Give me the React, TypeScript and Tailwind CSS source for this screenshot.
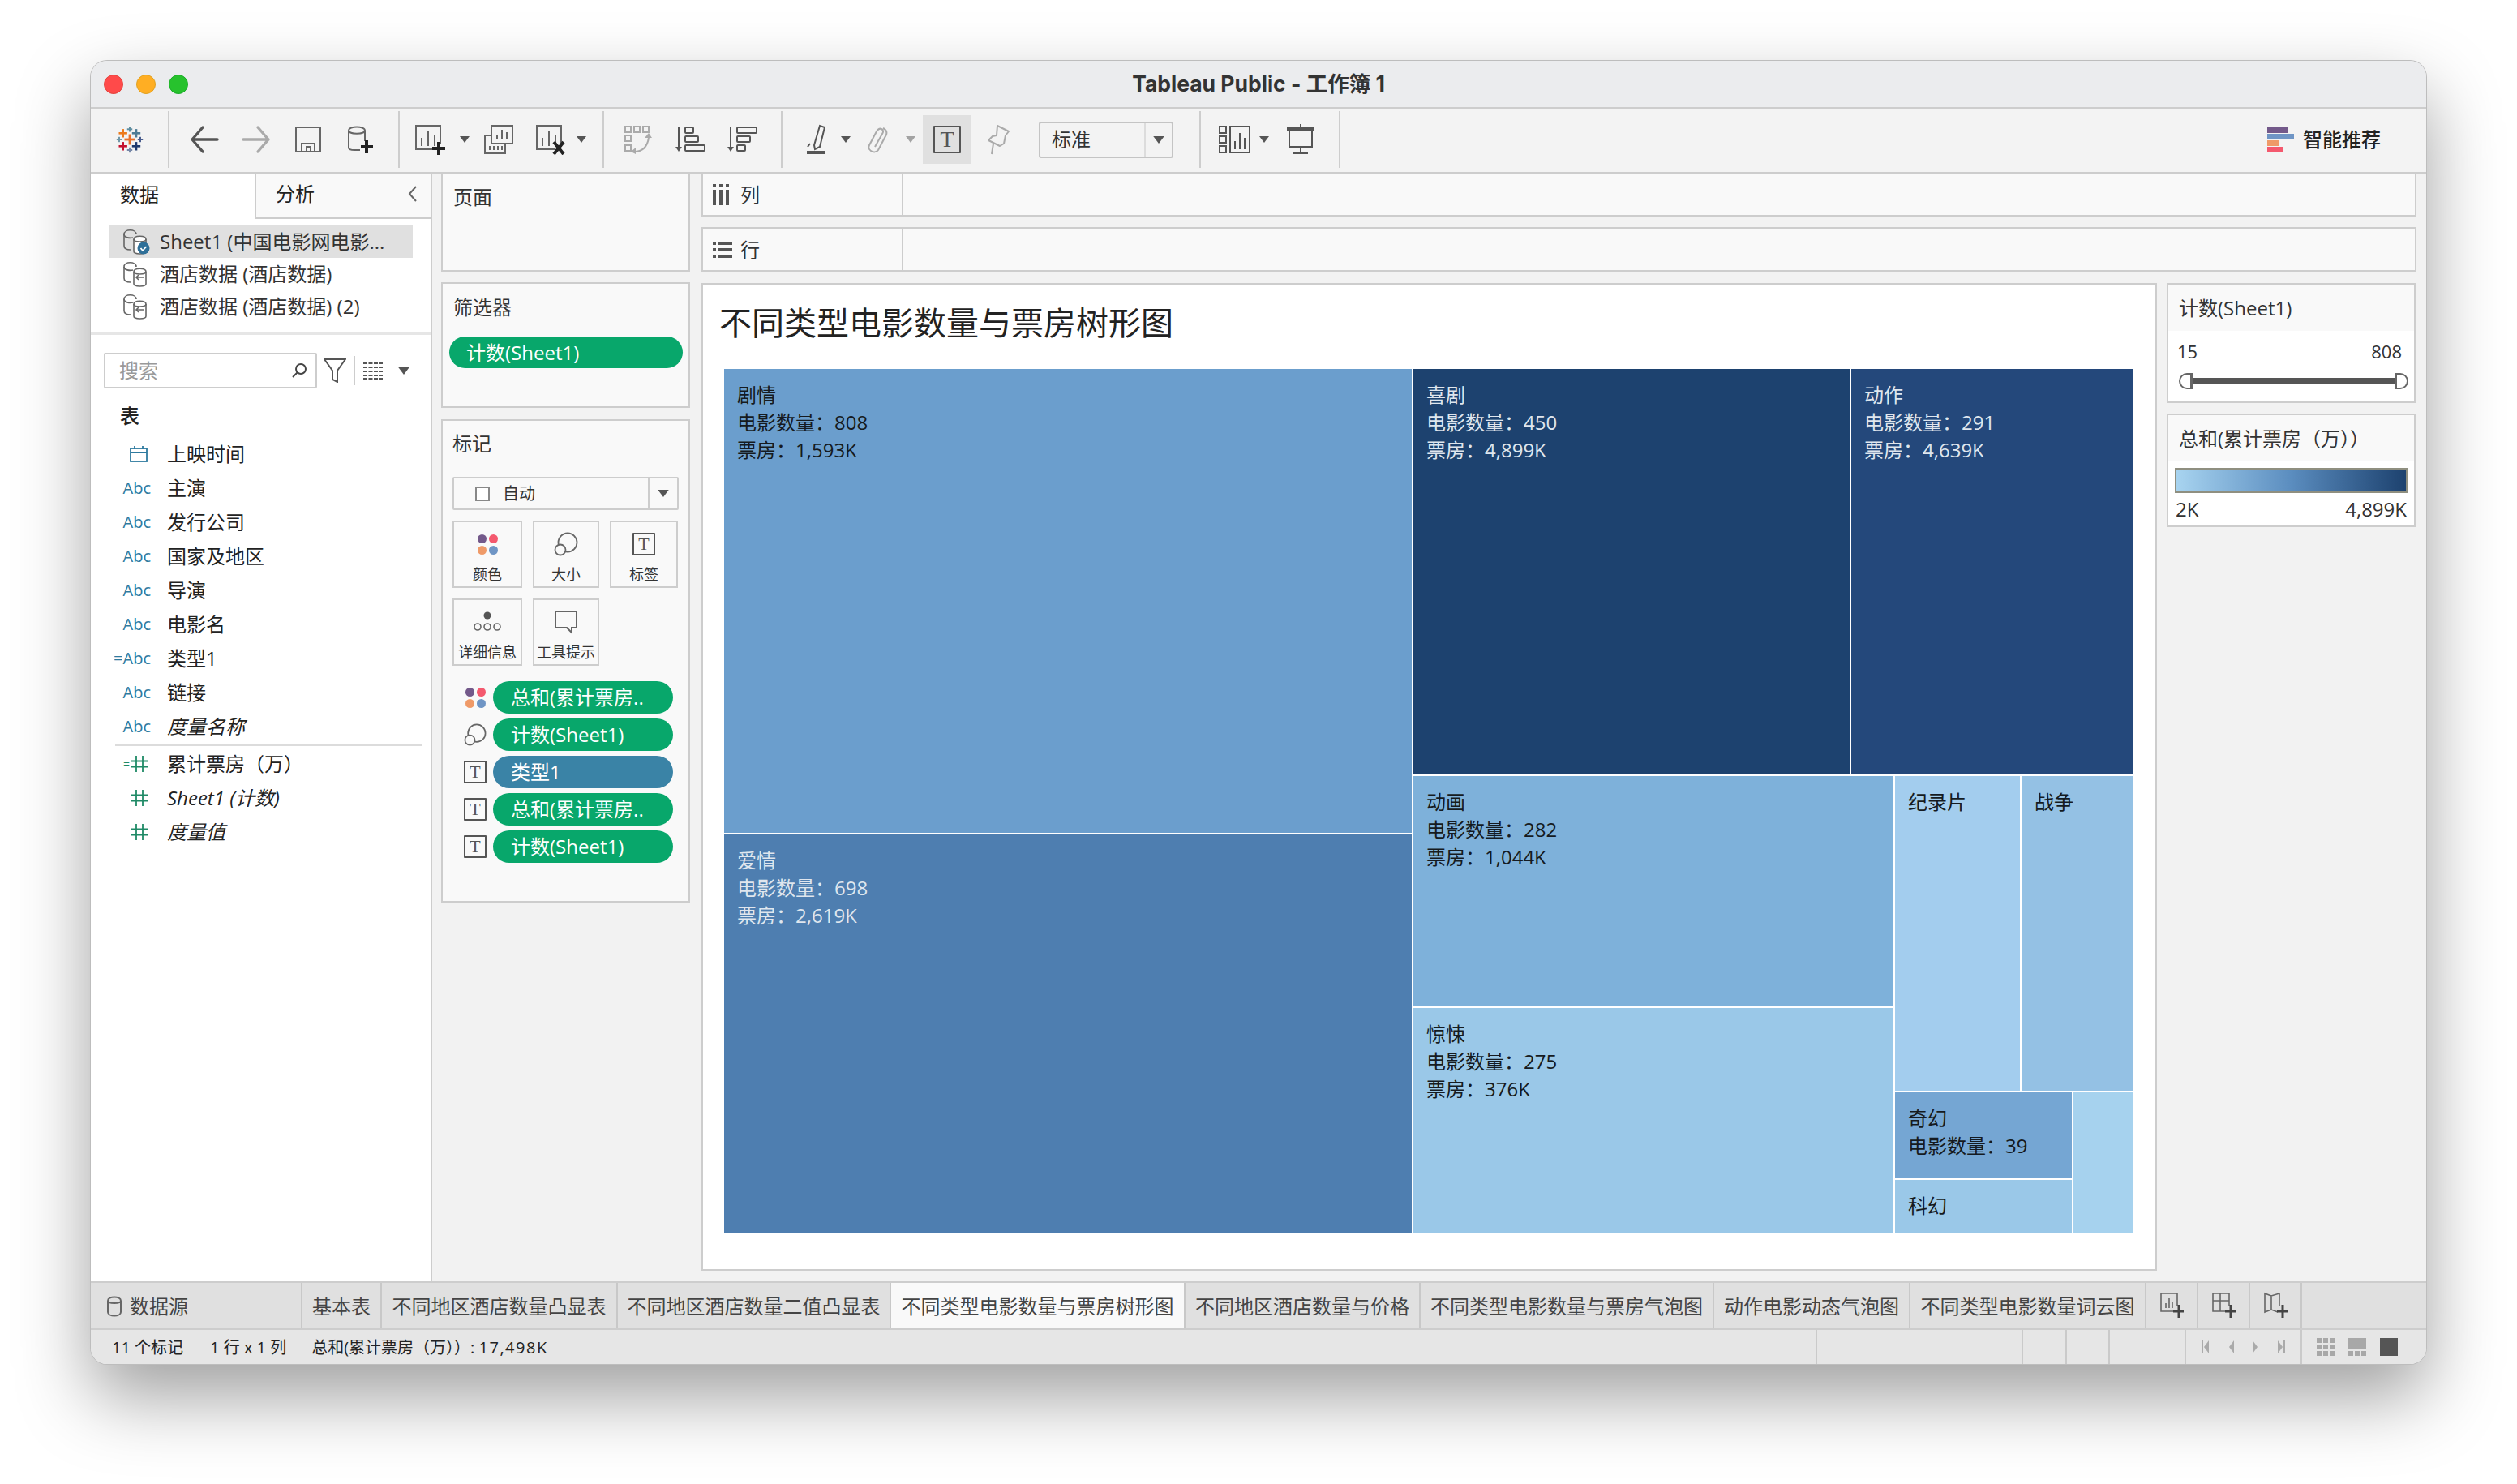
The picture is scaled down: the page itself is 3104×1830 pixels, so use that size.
const cardBorder = "border-[#cdcdcd]";

function Cross({ x, y, s, t, c }: { x: number; y: number; s: number; t: number; c: string }) {
  return (
    <g fill={c}>
      <rect x={x - s} y={y - t / 2} width={s * 2} height={t} />
      <rect x={x - t / 2} y={y - s} width={t} height={s * 2} />
    </g>
  );
}

function TableauLogo() {
  return (
    <svg width="36" height="36" viewBox="0 0 36 36">
      <Cross x={18} y={18} s={6.5} t={2.8} c="#e8702a" />
      <Cross x={9.7} y={10.3} s={5.2} t={2.6} c="#ec7a1c" />
      <Cross x={26} y={10.3} s={5.2} t={2.6} c="#4e7c96" />
      <Cross x={9.7} y={26.3} s={5.2} t={2.6} c="#c4102e" />
      <Cross x={26} y={26.3} s={5.2} t={2.6} c="#1f3a6e" />
      <Cross x={18} y={5.3} s={3.2} t={2} c="#5f8ea0" />
      <Cross x={5} y={18} s={3.2} t={2} c="#7198a8" />
      <Cross x={31} y={18} s={3.2} t={2} c="#4a5d8e" />
      <Cross x={18} y={31} s={3.2} t={2} c="#7788a8" />
    </svg>
  );
}

function Arrow({ back, color }: { back?: boolean; color: string }) {
  return (
    <svg width="36" height="36" viewBox="0 0 36 36" fill="none" stroke={color} strokeWidth="3.4" strokeLinecap="round" strokeLinejoin="round">
      {back ? <path d="M34 18H3M16 3L3 18l13 15" /> : <path d="M2 18h31M20 3l13 15-13 15" />}
    </svg>
  );
}

function SaveIcon() {
  return (
    <svg width="34" height="34" viewBox="0 0 34 34" fill="none" stroke="#666" strokeWidth="2">
      <rect x="2" y="2" width="30" height="30" />
      <path d="M9 32V22h16v10M15 32v-6h5v6" />
    </svg>
  );
}

function AddDb() {
  return (
    <svg width="34" height="36" viewBox="0 0 34 36" fill="none">
      <path d="M3 7c0-6 20-6 20 0v13M3 7v21c0 2 3 3 7 3h7M3 7c0 5 20 5 20 0" stroke="#666" strokeWidth="2" />
      <path d="M25 19v16M18 27h15" stroke="#222" strokeWidth="4" />
    </svg>
  );
}

function SheetIcon({ mark }: { mark: "plus" | "x" }) {
  return (
    <svg width="40" height="38" viewBox="0 0 40 38" fill="none">
      <path d="M25 31H3V2h30v22" stroke="#666" strokeWidth="2" />
      <path d="M10 27V17M18 27V8M26 27V14" stroke="#666" strokeWidth="2" />
      {mark === "plus" ? (
        <path d="M31 22v16M23 30h16" stroke="#222" strokeWidth="4" />
      ) : (
        <path d="M24 22l12 15M36 22L24 37" stroke="#222" strokeWidth="4" />
      )}
    </svg>
  );
}

function DupIcon() {
  return (
    <svg width="38" height="38" viewBox="0 0 38 38" fill="none" stroke="#666" strokeWidth="2">
      <rect x="10" y="2" width="26" height="22" fill="#f3f3f3" />
      <path d="M17 19v-6M23 19V7M29 19v-9" />
      <path d="M10 14H2v22h25V24" />
      <path d="M8 32v-5M13 32v-5M18 32v-5M23 32v-5" />
    </svg>
  );
}

function SwapIcon() {
  return (
    <svg width="36" height="36" viewBox="0 0 36 36" fill="none" stroke="#aaa" strokeWidth="2">
      <rect x="2" y="2" width="7" height="7" />
      <rect x="13" y="2" width="7" height="7" />
      <rect x="24" y="2" width="7" height="7" />
      <rect x="2" y="13" width="7" height="7" />
      <rect x="2" y="25" width="7" height="7" />
      <path d="M13 33c9 0 16-5 18-17" />
      <path d="M26 16l5-6 4 6z" fill="#aaa" stroke="none" />
      <path d="M15 28l-6 5 6 3z" fill="#aaa" stroke="none" />
    </svg>
  );
}

function SortIcon({ desc }: { desc?: boolean }) {
  const widths = desc ? [24, 16, 10] : [10, 16, 24];
  return (
    <svg width="38" height="34" viewBox="0 0 38 34" fill="none" stroke="#555" strokeWidth="2">
      <path d="M4 1v27" />
      <path d="M0 26h8l-4 6z" fill="#555" stroke="none" />
      {widths.map((w, i) => (
        <rect key={i} x="12" y={2 + i * 11} width={w} height="7" rx="1" />
      ))}
    </svg>
  );
}

function PenIcon() {
  return (
    <svg width="26" height="38" viewBox="0 0 26 38" fill="none" stroke="#555" strokeWidth="2">
      <path d="M10 26L17 2l6 2-6 24-6 3z" />
      <path d="M2 28l3-4" />
      <rect x="1" y="33" width="22" height="4" fill="#555" stroke="none" />
    </svg>
  );
}

function ClipIcon() {
  return (
    <svg width="28" height="34" viewBox="0 0 28 34" fill="none" stroke="#aaa" strokeWidth="2">
      <path d="M20 3c4 2 5 5 4 8L14 30c-2 3-6 3-9 1s-3-5-2-7L12 7c2-3 4-4 6-3s3 3 1 6l-9 16" />
    </svg>
  );
}

function PinIcon() {
  return (
    <svg width="30" height="38" viewBox="0 0 30 38" fill="none" stroke="#aaa" strokeWidth="2" strokeLinejoin="round">
      <path d="M14 2l14 7-4 5-2 10-5 3-14-7 5-5 5-1z" />
      <path d="M9 24L7 37" />
    </svg>
  );
}

function ChartPick() {
  return (
    <svg width="40" height="36" viewBox="0 0 40 36" fill="none" stroke="#555" strokeWidth="2">
      <rect x="1" y="2" width="8" height="8" />
      <rect x="1" y="14" width="8" height="8" />
      <rect x="1" y="26" width="8" height="8" />
      <rect x="14" y="2" width="24" height="32" />
      <path d="M20 30V20M26 30V10M32 30V16" />
    </svg>
  );
}

function PresentIcon() {
  return (
    <svg width="36" height="38" viewBox="0 0 36 38" fill="none" stroke="#555" strokeWidth="2">
      <rect x="1" y="4" width="34" height="5" fill="#555" stroke="none" />
      <path d="M4 8v20h28V8M18 0v6M18 28v8M9 36h18" />
    </svg>
  );
}

function Caret({ size = "s" }: { size?: "s" | "m" }) {
  return (
    <svg width={size === "s" ? 12 : 14} height={size === "s" ? 8 : 9} viewBox="0 0 12 8" fill="#555">
      <path d="M0 0h12L6 8z" />
    </svg>
  );
}

function SmartIcon() {
  return (
    <div className="flex w-[33px] flex-col gap-[1px]">
      <div className="h-[7px] w-[25px] bg-[#73598a]" />
      <div className="h-[7px] w-[33px] bg-[#6f95c5]" />
      <div className="h-[7px] w-[14px] bg-[#ef9a68]" />
      <div className="h-[7px] w-[19px] bg-[#f4596e]" />
    </div>
  );
}

function ToolSep({ className }: { className?: string }) {
  return <div className={`h-[70px] w-[2px] shrink-0 bg-[#cdcdcd] ${className ?? ""}`} />;
}

function Slot({ className, children }: { className: string; children?: React.ReactNode }) {
  return <div className={`flex shrink-0 items-center justify-center ${className}`}>{children}</div>;
}

function Toolbar() {
  return (
    <div className="flex h-[78px] items-center bg-[#f3f3f3] pb-[2px]">
      <Slot className="w-[95px]"><TableauLogo /></Slot>
      <ToolSep />
      <Slot className="ml-[11px] w-[64px]"><Arrow back color="#555" /></Slot>
      <Slot className="w-[64px]"><Arrow color="#aaa" /></Slot>
      <Slot className="w-[64px]"><SaveIcon /></Slot>
      <Slot className="w-[64px]"><AddDb /></Slot>
      <ToolSep className="ml-[15px]" />
      <Slot className="w-[74px]"><SheetIcon mark="plus" /></Slot>
      <Slot className="w-[12px]"><Caret /></Slot>
      <Slot className="w-[72px]"><DupIcon /></Slot>
      <Slot className="w-[56px]"><SheetIcon mark="x" /></Slot>
      <Slot className="ml-[4px] w-[12px]"><Caret /></Slot>
      <ToolSep className="ml-[20px]" />
      <Slot className="w-[84px]"><SwapIcon /></Slot>
      <Slot className="w-[46px]"><SortIcon /></Slot>
      <Slot className="w-[82px]"><SortIcon desc /></Slot>
      <ToolSep className="ml-[6px]" />
      <Slot className="ml-[12px] w-[60px]"><PenIcon /></Slot>
      <Slot className="w-[12px]"><Caret /></Slot>
      <Slot className="w-[68px]"><ClipIcon /></Slot>
      <Slot className="w-[12px] opacity-50"><Caret /></Slot>
      <Slot className="ml-[9px] h-[60px] w-[60px] bg-[#e0e0e0]"><TBox big /></Slot>
      <Slot className="w-[66px]"><PinIcon /></Slot>
      <div className="ml-[17px] flex h-[45px] w-[166px] items-center rounded-[3px] border-2 border-[#c4c4c4] text-[24px] text-[#333]">
        <span className="w-[128px] pl-[14px]">标准</span>
        <div className="flex h-full flex-1 items-center justify-center border-l-2 border-[#dcdcdc]"><Caret size="m" /></div>
      </div>
      <ToolSep className="ml-[32px]" />
      <Slot className="ml-[12px] w-[60px]"><ChartPick /></Slot>
      <Slot className="w-[12px]"><Caret /></Slot>
      <Slot className="w-[78px]"><PresentIcon /></Slot>
      <ToolSep className="ml-[8px]" />
      <div className="ml-auto flex items-center gap-[11px] pr-[56px]">
        <SmartIcon />
        <span className="text-[24px] font-medium leading-none text-[#222]">智能推荐</span>
      </div>
    </div>
  );
}

function TBox({ big }: { big?: boolean }) {
  return (
    <div
      className={`flex items-center justify-center rounded-[1px] border-2 border-[#555] font-['Liberation_Serif',serif] leading-none text-[#555] ${
        big ? "h-[34px] w-[34px] border-[#333] text-[28px] text-[#333]" : "h-[28px] w-[28px] text-[22px]"
      }`}
    >
      T
    </div>
  );
}

function DbIcon({ active }: { active?: boolean }) {
  return (
    <svg width="34" height="32" viewBox="0 0 34 32" fill="none" stroke="#666" strokeWidth="1.6">
      <path d="M2 7c0-7 15-7 15 0M2 7v14c0 3 3 5 8 5" />
      <path d="M2 7c0 4 7 5 11 4" />
      <path d="M14 13c0-5 15-5 15 0v15c0 4-15 4-15 0z" fill="#fff" />
      <path d="M14 13c0 4 15 4 15 0" />
      {active ? (
        <g>
          <circle cx="26" cy="24" r="7.5" fill="#2e6f98" stroke="none" />
          <path d="M22.5 24l2.5 3 4.5-5" stroke="#fff" strokeWidth="1.8" />
        </g>
      ) : (
        <path d="M17 20h9M20 17l-3 3 3 3" />
      )}
    </svg>
  );
}

function Calendar() {
  return (
    <svg width="22" height="22" viewBox="0 0 22 22" fill="none" stroke="#2e7a9f" strokeWidth="1.8">
      <rect x="1" y="4" width="20" height="16" />
      <path d="M1 9h20M6 1v4M16 1v4" />
    </svg>
  );
}

function Hash({ eq }: { eq?: boolean }) {
  return (
    <span className="flex items-center gap-[2px]">
      {eq && <span className="text-[14px] leading-none text-[#1f8a66]">=</span>}
      <svg width="20" height="22" viewBox="0 0 20 22" fill="none" stroke="#1f8a66" strokeWidth="1.8">
        <path d="M6 1v20M14 1v20M0 7.5h20M0 14.5h20" />
      </svg>
    </span>
  );
}

function Abc({ eq }: { eq?: boolean }) {
  return (
    <span className="text-[20px] leading-none text-[#2e7a9f]">{eq ? "=Abc" : "Abc"}</span>
  );
}

const dims = [
  { name: "主演" },
  { name: "发行公司" },
  { name: "国家及地区" },
  { name: "导演" },
  { name: "电影名" },
  { name: "类型1", eq: true },
  { name: "链接" },
  { name: "度量名称", it: true },
];

const measures = [
  { name: "累计票房（万）", eq: true },
  { name: "Sheet1 (计数)", it: true },
  { name: "度量值", it: true },
];

function FieldRow({ icon, name, italic, hash }: { icon: React.ReactNode; name: string; italic?: boolean; hash?: boolean }) {
  return (
    <div className="flex h-[42px] items-center text-[24px] text-[#222]">
      <div className={`flex w-[75px] shrink-0 justify-end ${hash ? "pr-[5px]" : "pr-[1px]"}`}>{icon}</div>
      <span className={`ml-[19px] ${italic ? "italic" : ""}`}>{name}</span>
    </div>
  );
}

function LeftPanel() {
  return (
    <div className="flex w-[421px] shrink-0 flex-col border-r-2 border-[#cdcdcd] bg-white">
      <div className="flex h-[56px] text-[24px] text-[#222]">
        <div className="flex w-[202px] items-center pb-[4px] pl-[36px]">数据</div>
        <div className="flex flex-1 items-center justify-between border-b-2 border-l-2 border-[#cdcdcd] bg-[#f9f9f9] pb-[4px] pl-[24px] pr-[16px]">
          <span>分析</span>
          <svg width="12" height="20" viewBox="0 0 12 20" fill="none" stroke="#666" strokeWidth="2">
            <path d="M10 1L2 10l8 9" />
          </svg>
        </div>
      </div>
      <div className="mt-[8px] flex flex-col text-[24px] text-[#333]">
        <div className="mx-[22px] flex h-[40px] items-center gap-[12px] bg-[#e0e0e0] pl-[17px]">
          <DbIcon active />
          <span className="whitespace-nowrap">Sheet1 (中国电影网电影...</span>
        </div>
        <div className="mx-[22px] flex h-[40px] items-center gap-[12px] pl-[17px]">
          <DbIcon />
          <span className="whitespace-nowrap">酒店数据 (酒店数据)</span>
        </div>
        <div className="mx-[22px] flex h-[40px] items-center gap-[12px] pl-[17px]">
          <DbIcon />
          <span className="whitespace-nowrap">酒店数据 (酒店数据) (2)</span>
        </div>
      </div>
      <div className="mt-[12px] h-[3px] bg-[#e6e6e6]" />
      <div className="mt-[22px] flex items-center pl-[16px]">
        <div className="flex h-[44px] w-[263px] items-center justify-between rounded-[2px] border-2 border-[#cdcdcd] pl-[17px] pr-[10px] text-[24px] text-[#999]">
          <span>搜索</span>
          <svg width="20" height="20" viewBox="0 0 20 20" fill="none" stroke="#444" strokeWidth="2">
            <circle cx="12" cy="8" r="6" />
            <path d="M7.5 12.5L2 18" />
          </svg>
        </div>
        <svg className="ml-[8px]" width="28" height="30" viewBox="0 0 28 30" fill="none" stroke="#555" strokeWidth="2">
          <path d="M1 1h26L17 15v14l-6-3V15z" />
        </svg>
        <div className="ml-[9px] h-[36px] w-[2px] bg-[#cdcdcd]" />
        <svg className="ml-[10px]" width="24" height="22" viewBox="0 0 24 22" fill="none" stroke="#555" strokeWidth="2" strokeDasharray="5 1.5">
          <path d="M0 2h24M0 7h24M0 12h24M0 17h24M0 21h24" />
        </svg>
        <div className="ml-[19px]"><Caret size="m" /></div>
      </div>
      <div className="mt-[17px] flex h-[34px] items-center pl-[36px] text-[24px] font-medium text-[#222]">表</div>
      <div className="mt-[9px]">
        <FieldRow icon={<Calendar />} name="上映时间" hash />
        {dims.map((d) => (
          <FieldRow key={d.name} icon={<Abc eq={d.eq} />} name={d.name} italic={d.it} />
        ))}
      </div>
      <div className="ml-[30px] mt-[1px] h-[2px] w-[378px] bg-[#dcdcdc]" />
      <div className="mt-[1px]">
        {measures.map((m) => (
          <FieldRow key={m.name} icon={<Hash eq={m.eq} />} name={m.name} italic={m.it} hash />
        ))}
      </div>
    </div>
  );
}

function Dots() {
  return (
    <div className="grid grid-cols-2 gap-[3px]">
      <div className="h-[11px] w-[11px] rounded-full bg-[#73598a]" />
      <div className="h-[11px] w-[11px] rounded-full bg-[#f4596e]" />
      <div className="h-[11px] w-[11px] rounded-full bg-[#ef9a68]" />
      <div className="h-[11px] w-[11px] rounded-full bg-[#6f95c5]" />
    </div>
  );
}

function SizeIcon() {
  return (
    <svg width="30" height="30" viewBox="0 0 30 30" fill="none" stroke="#666" strokeWidth="1.8">
      <circle cx="17" cy="13" r="11.5" />
      <circle cx="8" cy="22" r="6.5" fill="#f9f9f9" />
    </svg>
  );
}

function DetailIcon() {
  return (
    <svg width="34" height="26" viewBox="0 0 34 26" fill="none" stroke="#666" strokeWidth="1.6">
      <circle cx="17" cy="5" r="4.5" fill="#555" stroke="none" />
      <circle cx="5" cy="19" r="4" />
      <circle cx="17" cy="19" r="4" />
      <circle cx="29" cy="19" r="4" />
    </svg>
  );
}

function TipIcon() {
  return (
    <svg width="30" height="30" viewBox="0 0 30 30" fill="none" stroke="#666" strokeWidth="2">
      <path d="M2 2h26v20h-6v6l-6-6H2z" />
    </svg>
  );
}

function MarkBtn({ icon, label }: { icon: React.ReactNode; label: string }) {
  return (
    <div className="flex h-[83px] flex-col items-center border-2 border-[#cdcdcd]">
      <div className="flex h-[52px] items-center justify-center pt-[2px]">{icon}</div>
      <span className="whitespace-nowrap text-[18px] leading-[24px] text-[#333]">{label}</span>
    </div>
  );
}

function Pill({ text, blue }: { text: string; blue?: boolean }) {
  return (
    <div className={`flex h-[40px] w-[222px] items-center rounded-full pl-[22px] text-[24px] text-white ${blue ? "bg-[#3a83a6]" : "bg-[#08a76b]"}`}>
      <span className="whitespace-nowrap">{text}</span>
    </div>
  );
}

function MarkRow({ icon, text, blue }: { icon: React.ReactNode; text: string; blue?: boolean }) {
  return (
    <div className="ml-[14px] flex items-center gap-[8px]">
      <div className="flex w-[28px] items-center justify-center">{icon}</div>
      <Pill text={text} blue={blue} />
    </div>
  );
}

function MiddleCol() {
  return (
    <div className="ml-[11px] flex w-[307px] shrink-0 flex-col text-[24px] leading-[30px] text-[#333]">
      <div className={`h-[121px] border-x-2 border-b-2 ${cardBorder} bg-[#f9f9f9] pl-[13px] pt-[14px]`}>页面</div>
      <div className={`mt-[13px] h-[155px] border-2 ${cardBorder} bg-[#f9f9f9] pt-[14px]`}>
        <div className="pl-[13px]">筛选器</div>
        <div className="ml-[8px] mt-[21px] flex h-[39px] w-[288px] items-center rounded-full bg-[#08a76b] pl-[21px] text-white">计数(Sheet1)</div>
      </div>
      <div className={`mt-[14px] h-[596px] border-2 ${cardBorder} bg-[#f9f9f9] pl-[12px] pt-[13px]`}>
        <div>标记</div>
        <div className="mt-[26px] flex h-[41px] w-[279px] items-center rounded-[2px] border-2 border-[#cdcdcd] text-[20px]">
          <div className="ml-[26px] h-[18px] w-[18px] border-2 border-[#888] bg-white" />
          <span className="ml-[16px] w-[179px]">自动</span>
          <div className="flex h-full flex-1 items-center justify-center border-l-2 border-[#cdcdcd]"><Caret size="m" /></div>
        </div>
        <div className="mt-[13px] grid w-[279px] grid-cols-[86px_82px_84px] gap-[13px]">
          <MarkBtn icon={<Dots />} label="颜色" />
          <MarkBtn icon={<SizeIcon />} label="大小" />
          <MarkBtn icon={<TBox />} label="标签" />
          <MarkBtn icon={<DetailIcon />} label="详细信息" />
          <MarkBtn icon={<TipIcon />} label="工具提示" />
        </div>
        <div className="mt-[19px] flex flex-col gap-[6px]">
          <MarkRow icon={<Dots />} text="总和(累计票房.." />
          <MarkRow icon={<SizeIcon />} text="计数(Sheet1)" />
          <MarkRow icon={<TBox />} text="类型1" blue />
          <MarkRow icon={<TBox />} text="总和(累计票房.." />
          <MarkRow icon={<TBox />} text="计数(Sheet1)" />
        </div>
      </div>
    </div>
  );
}

function Cell({ bg, light, lines, className }: { bg: string; light?: boolean; lines?: string[]; className: string }) {
  return (
    <div className={`${bg} ${className} pl-[16px] pt-[15px] text-[24px] leading-[34px] whitespace-nowrap overflow-hidden ${light ? "text-[#dfe6ee]" : "text-[#151a20]"}`}>
      {lines?.map((l) => <div key={l}>{l}</div>)}
    </div>
  );
}

function Treemap() {
  return (
    <div className="ml-[26px] mt-[33px] flex h-[1066px] w-[1738px] gap-[2px]">
      <div className="flex w-[848px] flex-col gap-[2px]">
        <Cell className="h-[572px]" bg="bg-[#6b9ecd]" lines={["剧情", "电影数量：808", "票房：1,593K"]} />
        <Cell className="flex-1" bg="bg-[#4e7eb0]" light lines={["爱情", "电影数量：698", "票房：2,619K"]} />
      </div>
      <div className="flex flex-1 flex-col gap-[2px]">
        <div className="flex h-[500px] gap-[2px]">
          <Cell className="w-[538px]" bg="bg-[#1d426f]" light lines={["喜剧", "电影数量：450", "票房：4,899K"]} />
          <Cell className="flex-1" bg="bg-[#24487b]" light lines={["动作", "电影数量：291", "票房：4,639K"]} />
        </div>
        <div className="flex flex-1 gap-[2px]">
          <div className="flex w-[592px] flex-col gap-[2px]">
            <Cell className="h-[284px]" bg="bg-[#7eb1da]" lines={["动画", "电影数量：282", "票房：1,044K"]} />
            <Cell className="flex-1" bg="bg-[#9ac8e8]" lines={["惊悚", "电影数量：275", "票房：376K"]} />
          </div>
          <div className="flex flex-1 flex-col gap-[2px]">
            <div className="flex h-[388px] gap-[2px]">
              <Cell className="w-[154px]" bg="bg-[#a3cdee]" lines={["纪录片"]} />
              <Cell className="flex-1" bg="bg-[#94c1e4]" lines={["战争"]} />
            </div>
            <div className="flex flex-1 gap-[2px]">
              <div className="flex w-[218px] flex-col gap-[2px]">
                <Cell className="h-[106px]" bg="bg-[#75a6d3]" lines={["奇幻", "电影数量：39"]} />
                <Cell className="flex-1" bg="bg-[#9ac8e8]" lines={["科幻"]} />
              </div>
              <Cell className="flex-1" bg="bg-[#a6d2ee]" />
            </div>
          </div>
        </div>
      </div>
    </div>
  );
}

function RightCol() {
  return (
    <div className="ml-[12px] flex w-[307px] shrink-0 flex-col gap-[13px] text-[#333]">
      <div className={`h-[148px] border-2 ${cardBorder} bg-white`}>
        <div className="flex h-[57px] items-center bg-[#f9f9f9] pl-[13px] text-[24px]">计数(Sheet1)</div>
        <div className="mt-[10px] flex justify-between pl-[11px] pr-[15px] text-[22px] leading-[30px]">
          <span>15</span>
          <span>808</span>
        </div>
        <div className="mt-[12px] flex items-center pl-[13px]">
          <div className="h-[20px] w-[17px] rounded-l-full border-2 border-r-[3px] border-[#666] bg-white" />
          <div className="h-[8px] w-[249px] bg-[#555]" />
          <div className="h-[20px] w-[17px] rounded-r-full border-2 border-l-[3px] border-[#666] bg-white" />
        </div>
      </div>
      <div className={`h-[140px] border-2 ${cardBorder} bg-white`}>
        <div className="flex h-[57px] items-center bg-[#f9f9f9] pl-[13px] text-[24px] whitespace-nowrap">总和(累计票房（万））</div>
        <div className="ml-[8px] mt-[8px] h-[31px] w-[287px] border-2 border-[#8f8f80] bg-gradient-to-r from-[#a8d4f0] via-[#5b8dbf] to-[#1d426f]" />
        <div className="mt-[6px] flex justify-between px-[9px] text-[24px] leading-[28px]">
          <span>2K</span>
          <span>4,899K</span>
        </div>
      </div>
    </div>
  );
}

const tabs = [
  { t: "基本表", w: "w-[98px]" },
  { t: "不同地区酒店数量凸显表", w: "w-[291px]" },
  { t: "不同地区酒店数量二值凸显表", w: "w-[337px]" },
  { t: "不同类型电影数量与票房树形图", w: "w-[363px]", active: true },
  { t: "不同地区酒店数量与价格", w: "w-[290px]" },
  { t: "不同类型电影数量与票房气泡图", w: "w-[362px]" },
  { t: "动作电影动态气泡图", w: "w-[242px]" },
  { t: "不同类型电影数量词云图", w: "w-[291px]" },
];

function TabAdd({ kind }: { kind: "sheet" | "dash" | "story" }) {
  return (
    <div className="flex h-full w-[64px] shrink-0 items-center justify-center border-r-2 border-[#c8c8c8]">
      <svg width="30" height="34" viewBox="0 0 30 34" fill="none">
        {kind === "sheet" && <path d="M19 24H2V2h20v16M8 20v-6M12 20V8M16 20v-8" stroke="#666" strokeWidth="1.6" />}
        {kind === "dash" && <path d="M18 24H2V2h20v16M2 11h20M11 2v22" stroke="#666" strokeWidth="1.6" />}
        {kind === "story" && <path d="M18 25l-8-3-8 3V2l8 3 10-3v16M2 2l8 3v17" stroke="#666" strokeWidth="1.6" />}
        <path d="M24 16v16M17 24h13" stroke="#444" strokeWidth="3" />
      </svg>
    </div>
  );
}

function TabBar() {
  return (
    <div className="flex h-[60px] border-y-2 border-[#cdcdcd] bg-[#e0e0e0] text-[24px] text-[#444]">
      <div className="flex h-full w-[261px] shrink-0 items-center gap-[10px] border-r-2 border-[#c8c8c8] pl-[20px] pt-[2px]">
        <svg width="18" height="26" viewBox="0 0 18 26" fill="none" stroke="#666" strokeWidth="2">
          <path d="M1 6c0-6 16-6 16 0v14c0 6-16 6-16 0zM1 6c0 4 16 4 16 0" />
        </svg>
        <span>数据源</span>
      </div>
      {tabs.map((t) => (
        <div
          key={t.t}
          className={`flex h-full shrink-0 items-center justify-center whitespace-nowrap border-r-2 border-[#c8c8c8] pt-[2px] ${t.w} ${t.active ? "bg-[#f9f9f9]" : ""}`}
        >
          {t.t}
        </div>
      ))}
      <TabAdd kind="sheet" />
      <TabAdd kind="dash" />
      <TabAdd kind="story" />
    </div>
  );
}

function NavArrow({ dir, bar }: { dir: "l" | "r"; bar?: boolean }) {
  return (
    <svg width="10" height="16" viewBox="0 0 10 16" fill="#aaa">
      {dir === "l" ? <path d="M9 0v16L3 8z" /> : <path d="M1 0v16l6-8z" />}
      {bar && <rect x={dir === "l" ? 0 : 8} y="0" width="2" height="16" />}
    </svg>
  );
}

function StatusBar() {
  return (
    <div className="flex h-[42px] items-stretch bg-[#e6e6e6] text-[20px] text-[#222]">
      <div className="flex w-[2129px] shrink-0 items-center border-r-2 border-[#cacaca] pl-[26px] pt-[1px]">
        <span>11 个标记</span>
        <span className="ml-[33px]">1 行 x 1 列</span>
        <span className="ml-[31px]">总和(累计票房（万））: <span className="tracking-[1.5px]">17,498K</span></span>
      </div>
      <div className="w-[254px] border-r-2 border-[#cacaca]" />
      <div className="w-[54px] border-r-2 border-[#cacaca]" />
      <div className="w-[53px] border-r-2 border-[#cacaca]" />
      <div className="w-[94px] border-r-2 border-[#cacaca]" />
      <div className="flex w-[143px] items-center justify-center gap-[21px] border-r-2 border-[#cacaca]">
        <NavArrow dir="l" bar />
        <NavArrow dir="l" />
        <NavArrow dir="r" />
        <NavArrow dir="r" bar />
      </div>
      <div className="flex flex-1 items-center gap-[17px] pl-[18px]">
        <svg width="22" height="22" viewBox="0 0 22 22" fill="#a8a8a8">
          {[0, 8, 16].map((y) =>
            [0, 8, 16].map((x) => <rect key={`${x}-${y}`} x={x} y={y} width="6" height="6" />)
          )}
        </svg>
        <svg width="22" height="22" viewBox="0 0 22 22" fill="#a8a8a8">
          <rect x="0" y="0" width="22" height="14" />
          {[0, 8, 16].map((x) => <rect key={x} x={x} y="16" width="6" height="6" />)}
        </svg>
        <div className="h-[22px] w-[22px] bg-[#555]" />
      </div>
    </div>
  );
}

export default function App() {
  return (
    <div className="h-[1830px] w-[3104px] overflow-hidden bg-white pl-[112px] pt-[75px] font-['Open_Sans','Noto_Sans_CJK_SC',sans-serif]">
      <div className="flex h-[1607px] w-[2880px] flex-col overflow-hidden rounded-[20px] bg-[#f2f2f2] shadow-[0_0_0_1px_#bdbdbd,0_40px_90px_rgba(0,0,0,0.38)]">
        {/* title bar */}
        <div className="relative flex h-[59px] shrink-0 items-center justify-center border-b-2 border-[#cdcdcd] bg-[#ebecee]">
          <div className="absolute left-[16px] top-[17px] flex gap-[16px]">
            <div className="h-[24px] w-[24px] rounded-full border border-[#e0443e] bg-[#ff4a4a]" />
            <div className="h-[24px] w-[24px] rounded-full border border-[#dea123] bg-[#ffae23]" />
            <div className="h-[24px] w-[24px] rounded-full border border-[#1aab29] bg-[#27c22d]" />
          </div>
          <span className="font-['Inter','Noto_Sans_CJK_SC',sans-serif] text-[26.5px] font-bold text-[#333]">Tableau Public - 工作簿 1</span>
        </div>
        <Toolbar />
        <div className="flex h-[1368px] shrink-0 border-t-2 border-[#cdcdcd] bg-[#f2f2f2]">
          <LeftPanel />
          <MiddleCol />
          <div className="ml-[14px] flex w-[2115px] shrink-0 flex-col text-[24px] text-[#333]">
            <div className={`flex h-[53px] items-center border-x-2 border-b-2 ${cardBorder} bg-[#f9f9f9]`}>
              <div className="flex h-full w-[247px] items-center gap-[14px] border-r-2 border-[#cdcdcd] pl-[12px]">
                <svg width="20" height="26" viewBox="0 0 20 26" fill="#555">
                  <rect x="0" y="0" width="4" height="4" />
                  <rect x="8" y="0" width="4" height="4" />
                  <rect x="16" y="0" width="4" height="4" />
                  <rect x="0" y="7" width="4" height="19" />
                  <rect x="8" y="7" width="4" height="19" />
                  <rect x="16" y="7" width="4" height="19" />
                </svg>
                <span>列</span>
              </div>
            </div>
            <div className={`mt-[13px] flex h-[55px] items-center border-2 ${cardBorder} bg-[#f9f9f9]`}>
              <div className="flex h-full w-[247px] items-center gap-[10px] border-r-2 border-[#cdcdcd] pl-[12px]">
                <svg width="24" height="22" viewBox="0 0 24 22" fill="#555">
                  <rect x="0" y="1" width="4" height="4" />
                  <rect x="7" y="1" width="17" height="4" />
                  <rect x="0" y="9" width="4" height="4" />
                  <rect x="7" y="9" width="17" height="4" />
                  <rect x="0" y="17" width="4" height="4" />
                  <rect x="7" y="17" width="17" height="4" />
                </svg>
                <span>行</span>
              </div>
            </div>
            <div className="mt-[14px] flex h-[1218px]">
              <div className={`h-full w-[1795px] shrink-0 border-2 ${cardBorder} bg-white pt-[23px]`}>
                <div className="pl-[20px] text-[40px] leading-[48px] text-[#222]">不同类型电影数量与票房树形图</div>
                <Treemap />
              </div>
              <RightCol />
            </div>
          </div>
        </div>
        <TabBar />
        <StatusBar />
      </div>
    </div>
  );
}
